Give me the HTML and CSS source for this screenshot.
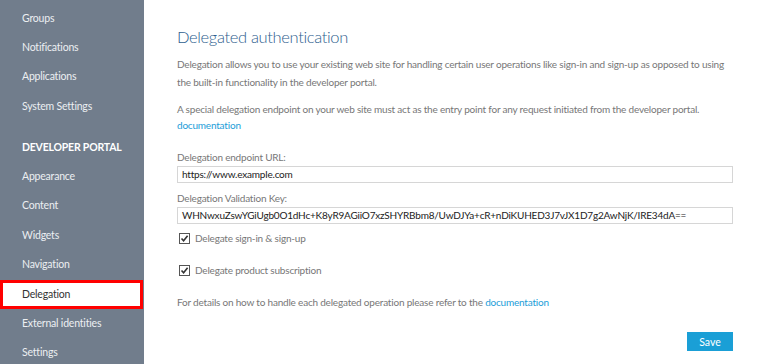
FILE: index.html
```html
<!DOCTYPE html>
<html lang="en">
<head>
  <meta charset="UTF-8" />
  <title>Delegation</title>
  <link rel="stylesheet" href="styles.css">
</head>
<body>
  <nav class="sidebar">
    <a class="nav-item">Groups</a>
    <a class="nav-item">Notifications</a>
    <a class="nav-item">Applications</a>
    <a class="nav-item">System Settings</a>
    <div class="nav-header">DEVELOPER PORTAL</div>
    <a class="nav-item">Appearance</a>
    <a class="nav-item">Content</a>
    <a class="nav-item">Widgets</a>
    <a class="nav-item">Navigation</a>
    <a class="nav-item active">Delegation</a>
    <a class="nav-item">External identities</a>
    <a class="nav-item">Settings</a>
  </nav>

  <main class="content">
    <h1>Delegated authentication</h1>
    <p class="intro">Delegation allows you to use your existing web site for handling certain user operations like sign-in and sign-up as opposed to using the built-in functionality in the developer portal.</p>
    <p class="intro">A special delegation endpoint on your web site must act as the entry point for any request initiated from the developer portal.<br><a class="link">documentation</a></p>

    <label class="field-label">Delegation endpoint URL:</label>
    <div class="input">https://www.example.com</div>
    <label class="field-label">Delegation Validation Key:</label>
    <div class="input">WHNwxuZswYGiUgb0O1dHc+K8yR9AGiiO7xzSHYRBbm8/UwDJYa+cR+nDiKUHED3J7vJX1D7g2AwNjK/IRE34dA==</div>

    <div class="check">
      <span class="box"><svg width="9" height="9" viewBox="0 0 9 9"><path d="M1.5 4.5 L3.6 6.8 L7.6 1.8" fill="none" stroke="#333" stroke-width="1.6"/></svg></span>
      Delegate sign-in &amp; sign-up
    </div>
    <div class="check second">
      <span class="box"><svg width="9" height="9" viewBox="0 0 9 9"><path d="M1.5 4.5 L3.6 6.8 L7.6 1.8" fill="none" stroke="#333" stroke-width="1.6"/></svg></span>
      Delegate product subscription
    </div>

    <p class="note">For details on how to handle each delegated operation please refer to the <a class="link">documentation</a></p>

    <div class="actions">
      <button class="save">Save</button>
    </div>
  </main>
</body>
</html>
```

FILE: styles.css
```css
body {
  margin: 0;
  font-family: Lato, "Noto Sans", sans-serif;
  font-size: 10px;
  letter-spacing: -0.2px;
  color: #777;
  background: #fff;
  display: flex;
  height: 364px;
  overflow: hidden;
}
.sidebar {
  width: 144px;
  flex-shrink: 0;
  background: #717d8c;
  padding-top: 3.5px;
  display: flex;
  flex-direction: column;
}
.nav-item {
  display: block;
  height: 29.4px;
  line-height: 29.4px;
  padding-left: 22px;
  color: #eceff2;
  font-size: 10.5px;
}
.nav-header {
  height: 29.4px;
  line-height: 29.4px;
  margin-top: 11.5px;
  padding-left: 22px;
  color: #fff;
  font-weight: bold;
  font-size: 10.5px;
}
.nav-item.active {
  width: 143px;
  box-sizing: border-box;
  background: #fff;
  color: #333;
  border: 3px solid #ff0000;
  padding-left: 19px;
  line-height: 23.4px;
}
.content {
  flex: 1;
  padding: 0 33px;
}
h1 {
  margin: 26px 0 7px;
  font-size: 16.5px;
  letter-spacing: -0.35px;
  font-weight: 300;
  line-height: 22px;
  color: #2e5e8e;
}
.intro {
  margin: 0 0 10px;
  line-height: 18px;
}
.intro + .intro {
  line-height: 16px;
}
.link {
  color: #1b9dd8;
}
.field-label {
  display: block;
  margin-top: 16px;
  line-height: 16px;
}
.field-label + .input {
  margin-top: 1px;
}
.input + .field-label {
  margin-top: 7px;
}
.input {
  height: 17px;
  border: 1px solid #d6d6d6;
  box-sizing: border-box;
  padding: 0 4px;
  line-height: 15px;
  color: #222;
  white-space: nowrap;
  overflow: hidden;
}
.check {
  display: flex;
  align-items: center;
  gap: 5px;
  margin: 8px 0 0 2px;
  line-height: 12px;
}
.check.second {
  margin-top: 20px;
}
.box {
  width: 9px;
  height: 9px;
  border: 1px solid #555;
  display: flex;
}
.note {
  margin: 20px 0 0;
}
.actions {
  display: flex;
  justify-content: flex-end;
  margin-top: 24px;
}
.save {
  width: 46px;
  height: 19px;
  border: none;
  background: #1a9fd6;
  color: #fff;
  font-family: inherit;
  font-size: 10.5px;
  padding: 0;
}
```
